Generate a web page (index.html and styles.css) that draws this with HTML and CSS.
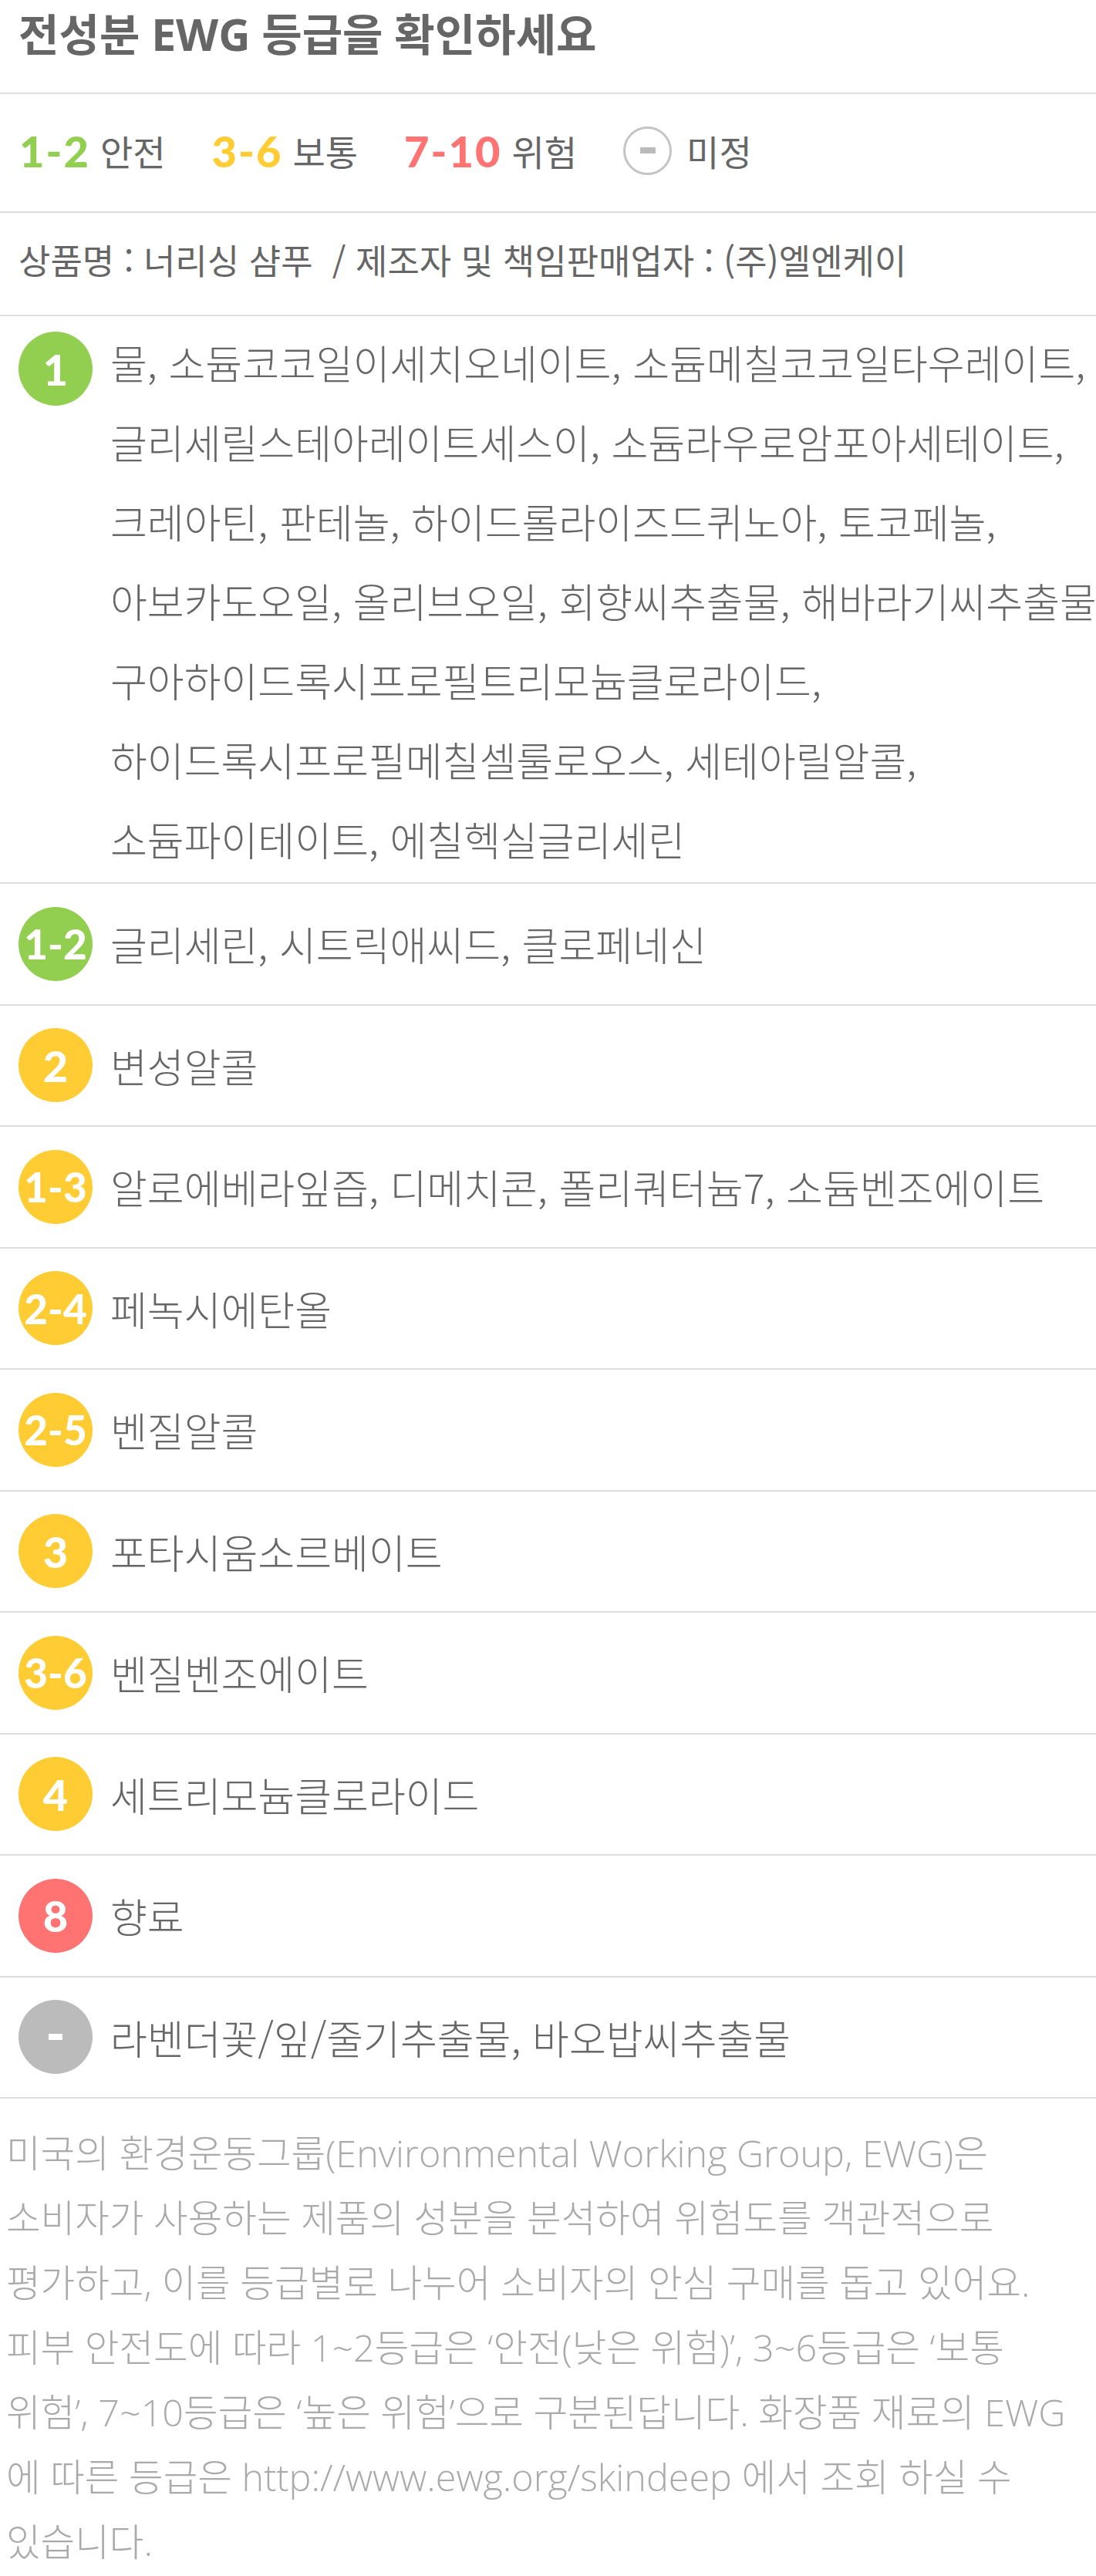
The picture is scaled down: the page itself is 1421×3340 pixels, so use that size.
FILE: index.html
```html
<!DOCTYPE html>
<html lang="ko">
<head>
<meta charset="utf-8">
<title>전성분 EWG 등급</title>
<link rel="stylesheet" href="styles.css">
</head>
<body>
<div class="page">
  <h1 class="title">전성분 EWG 등급을 확인하세요</h1>

  <div class="legend">
    <span class="lg"><b class="num c-green">1-2</b><span class="lbl">안전</span></span>
    <span class="lg"><b class="num c-yellow">3-6</b><span class="lbl">보통</span></span>
    <span class="lg"><b class="num c-red">7-10</b><span class="lbl">위험</span></span>
    <span class="lg"><span class="ring"><i class="ring-dash"></i></span><span class="lbl">미정</span></span>
  </div>

  <div class="product">상품명 : 너리싱 샴푸 &nbsp;/ 제조자 및 책임판매업자 : (주)엘엔케이</div>

  <ul class="list">
    <li class="row multi">
      <span class="badge bg-green single">1</span>
      <p class="names">물, 소듐코코일이세치오네이트, 소듐메칠코코일타우레이트, 글리세릴스테아레이트세스이, 소듐라우로암포아세테이트, 크레아틴, 판테놀, 하이드롤라이즈드퀴노아, 토코페놀, 아보카도오일, 올리브오일, 회향씨추출물, 해바라기씨추출물 구아하이드록시프로필트리모늄클로라이드, 하이드록시프로필메칠셀룰로오스, 세테아릴알콜, 소듐파이테이트, 에칠헥실글리세린</p>
    </li>
    <li class="row">
      <span class="badge bg-green">1-2</span>
      <p class="names">글리세린, 시트릭애씨드, 클로페네신</p>
    </li>
    <li class="row">
      <span class="badge bg-yellow single">2</span>
      <p class="names">변성알콜</p>
    </li>
    <li class="row">
      <span class="badge bg-yellow">1-3</span>
      <p class="names">알로에베라잎즙, 디메치콘, 폴리쿼터늄7, 소듐벤조에이트</p>
    </li>
    <li class="row">
      <span class="badge bg-yellow">2-4</span>
      <p class="names">페녹시에탄올</p>
    </li>
    <li class="row">
      <span class="badge bg-yellow">2-5</span>
      <p class="names">벤질알콜</p>
    </li>
    <li class="row">
      <span class="badge bg-yellow single">3</span>
      <p class="names">포타시움소르베이트</p>
    </li>
    <li class="row">
      <span class="badge bg-yellow">3-6</span>
      <p class="names">벤질벤조에이트</p>
    </li>
    <li class="row">
      <span class="badge bg-yellow single">4</span>
      <p class="names">세트리모늄클로라이드</p>
    </li>
    <li class="row">
      <span class="badge bg-red single">8</span>
      <p class="names">향료</p>
    </li>
    <li class="row">
      <span class="badge bg-gray"><i class="badge-dash"></i></span>
      <p class="names">라벤더꽃/잎/줄기추출물, 바오밥씨추출물</p>
    </li>
  </ul>

  <p class="note">미국의 환경운동그룹(Environmental Working Group, EWG)은 소비자가 사용하는 제품의 성분을 분석하여 위험도를 객관적으로 평가하고, 이를 등급별로 나누어 소비자의 안심 구매를 돕고 있어요. 피부 안전도에 따라 1~2등급은 ‘안전(낮은 위험)’, 3~6등급은 ‘보통 위험’, 7~10등급은 ‘높은 위험’으로 구분된답니다. 화장품 재료의 EWG<wbr>에 따른 등급은 http://www.ewg.org/skindeep 에서 조회 하실 수 있습니다.</p>
</div>
</body>
</html>
```

FILE: styles.css
```css
html, body {
  margin: 0;
  padding: 0;
  background: #ffffff;
}

body {
  font-family: "Noto Sans CJK KR", "Noto Sans", sans-serif;
  color: #666666;
}

.page {
  width: 1421px;
  overflow: hidden;
}

.title {
  margin: 0;
  height: 120px;
  line-height: 88px;
  padding-left: 24px;
  font-family: "Open Sans", "Noto Sans CJK KR", sans-serif;
  font-size: 57px;
  font-weight: 700;
  color: #666666;
  border-bottom: 2px solid #dddddd;
}

.legend {
  display: flex;
  align-items: center;
  height: 146px;
  padding: 0 0 6px 25px;
  border-bottom: 2px solid #dddddd;
}

.lg {
  display: flex;
  align-items: center;
  margin-right: 60px;
}

.num {
  font-family: Lato, "Noto Sans", sans-serif;
  font-weight: 900;
  font-size: 56px;
  letter-spacing: 2px;
  margin-right: 13px;
}

.lbl {
  font-size: 46px;
  font-weight: 400;
  color: #666666;
}

.c-green { color: #92cf50; }
.c-yellow { color: #ffcc33; }
.c-red { color: #ff7373; }

.ring {
  width: 57px;
  height: 57px;
  border: 3px solid #c4c4c4;
  border-radius: 50%;
  display: flex;
  align-items: center;
  justify-content: center;
  margin-right: 19px;
}

.ring-dash {
  display: block;
  width: 20px;
  height: 8px;
  background: #bbbbbb;
}

.product {
  display: flex;
  align-items: center;
  height: 120px;
  padding: 0 0 12px 24px;
  font-size: 45px;
  font-weight: 400;
  border-bottom: 2px solid #dddddd;
}

.list {
  list-style: none;
  margin: 0;
  padding: 0;
}

.row {
  display: flex;
  align-items: center;
  min-height: 155.5px;
  padding-left: 24px;
  border-bottom: 2px solid #dddddd;
}

.row.multi {
  align-items: flex-start;
  padding-top: 8px;
  padding-bottom: 5px;
}

.row.multi .badge {
  margin-top: 12px;
}

.badge {
  flex: none;
  width: 96px;
  height: 96px;
  border-radius: 50%;
  display: flex;
  align-items: center;
  justify-content: center;
  margin-right: 23px;
  color: #ffffff;
  font-family: Lato, "Noto Sans", sans-serif;
  font-weight: 900;
  font-size: 53px;
  letter-spacing: 0;
}

.badge.single {
  font-size: 56px;
}

.bg-green { background: #92cf50; }
.bg-yellow { background: #ffcc33; }
.bg-red { background: #ff7373; }
.bg-gray { background: #bbbbbb; }

.badge-dash {
  display: block;
  width: 18px;
  height: 8px;
  background: #ffffff;
}

.names {
  flex: 1;
  margin: 0 -24px 0 0;
  font-size: 52px;
  line-height: 103px;
  font-weight: 300;
  color: #666666;
  word-break: keep-all;
}

.note {
  margin: 0;
  padding: 28px 0 3px 8px;
  font-family: "Open Sans", "Noto Sans CJK KR", sans-serif;
  font-size: 48.5px;
  line-height: 84px;
  font-weight: 300;
  color: #aaaaaa;
  word-break: keep-all;
}
```
